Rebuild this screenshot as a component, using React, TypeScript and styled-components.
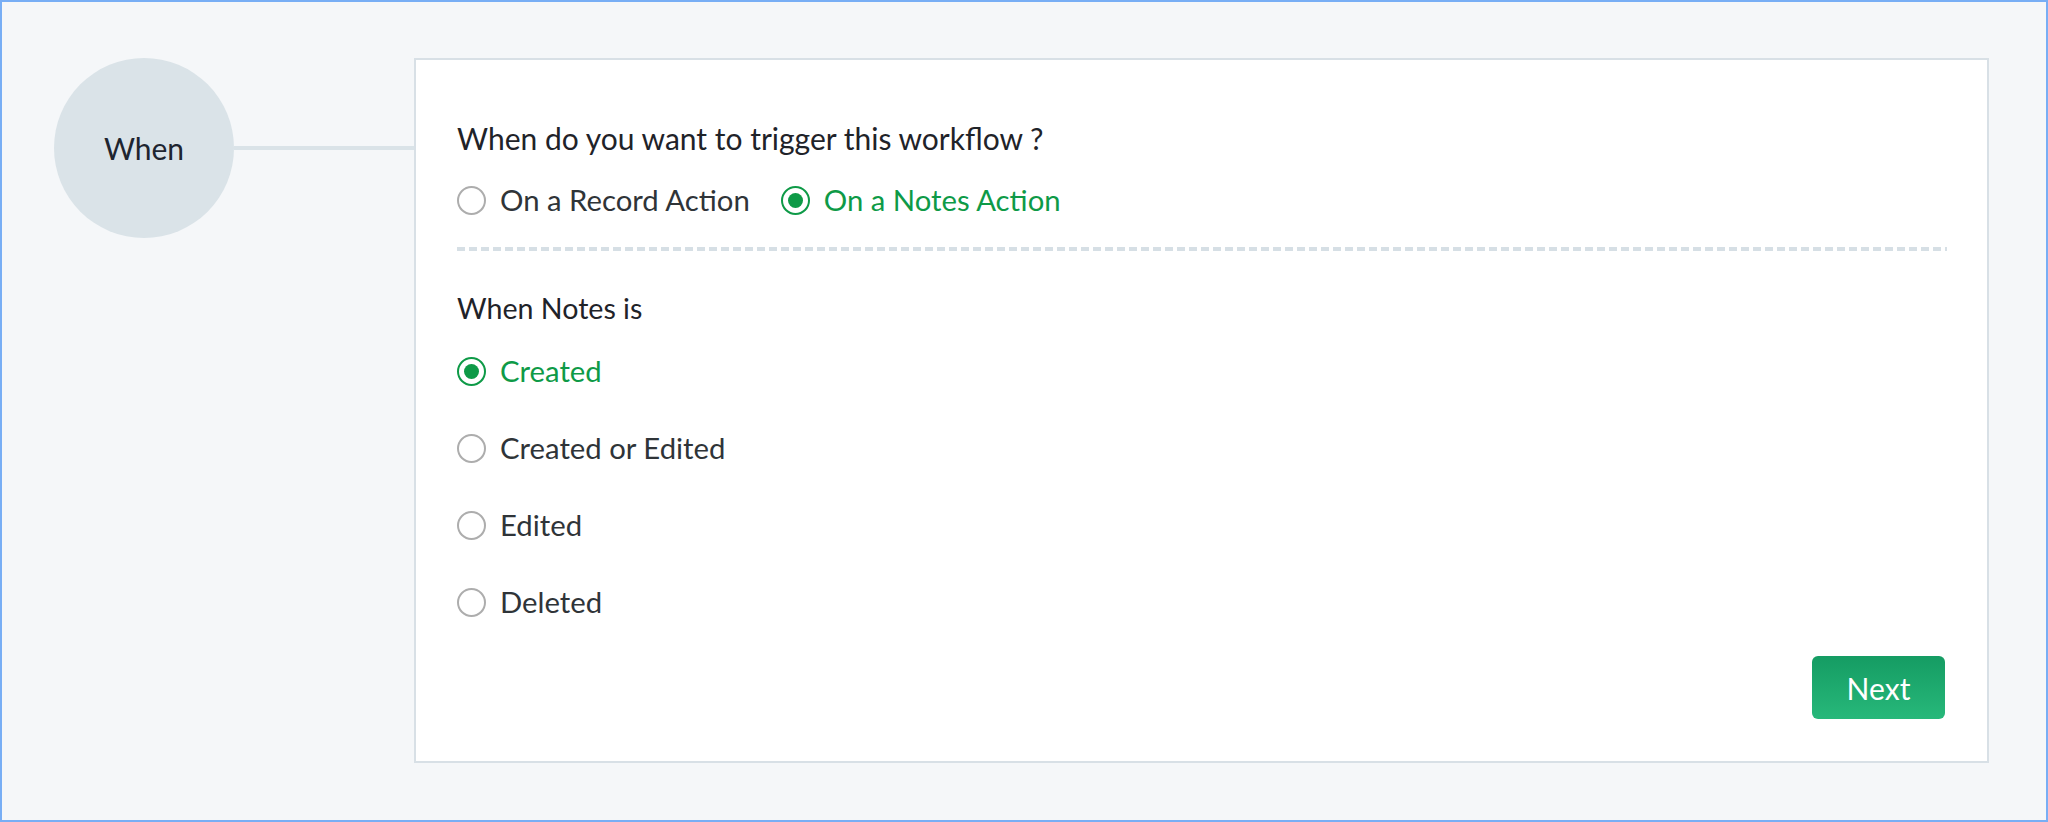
import React from 'react';
import styled, { createGlobalStyle } from 'styled-components';

const GlobalStyle = createGlobalStyle`
  * { box-sizing: border-box; }
  body {
    margin: 0;
    font-family: Lato, "Noto Sans", sans-serif;
  }
`;

const GREEN = '#0e9a47';

const Radio: React.FC<{ label: string; checked?: boolean }> = ({ label, checked }) => (
  <Option>
    <Dot checked={checked} />
    <OptionLabel checked={checked}>{label}</OptionLabel>
  </Option>
);

const App: React.FC = () => {
  return (
    <Frame>
      <GlobalStyle />
      <StepBubble>When</StepBubble>
      <Connector />
      <Panel>
        <Question>When do you want to trigger this workflow ?</Question>
        <InlineOptions>
          <Radio label="On a Record Action" />
          <Radio label="On a Notes Action" checked />
        </InlineOptions>
        <Divider />
        <SubHeading>When Notes is</SubHeading>
        <StackedOptions>
          <Radio label="Created" checked />
          <Radio label="Created or Edited" />
          <Radio label="Edited" />
          <Radio label="Deleted" />
        </StackedOptions>
        <Footer>
          <NextButton>Next</NextButton>
        </Footer>
      </Panel>
    </Frame>
  );
};

export default App;

const Frame = styled.div`
  width: 100vw;
  height: 822px;
  border: 2px solid #78aef5;
  background: #f5f7f9;
  display: flex;
  align-items: flex-start;
  padding: 56px 0 0 52px;
`;

const StepBubble = styled.div`
  width: 180px;
  height: 180px;
  flex-shrink: 0;
  border-radius: 50%;
  background: #dae3e8;
  display: flex;
  align-items: center;
  justify-content: center;
  color: #1e2530;
  font-size: 30px;
`;

const Connector = styled.div`
  width: 180px;
  height: 4px;
  flex-shrink: 0;
  margin-top: 88px;
  background: #dae3e8;
`;

const Panel = styled.div`
  width: 1575px;
  height: 705px;
  background: #fff;
  border: 2px solid #d8e0e6;
  padding: 61px 42px 0 41px;
  display: flex;
  flex-direction: column;
`;

const Question = styled.div`
  font-size: 30px;
  line-height: 34px;
  color: #1f2329;
`;

const InlineOptions = styled.div`
  display: flex;
  gap: 31px;
  margin-top: 30px;
`;

const Option = styled.label`
  display: flex;
  align-items: center;
  gap: 14px;
  height: 30px;
`;

const Dot = styled.span<{ checked?: boolean }>`
  width: 29px;
  height: 29px;
  flex-shrink: 0;
  border-radius: 50%;
  border: 2px solid ${p => (p.checked ? GREEN : '#adadad')};
  display: flex;
  align-items: center;
  justify-content: center;
  &::after {
    content: '';
    display: ${p => (p.checked ? 'block' : 'none')};
    width: 15px;
    height: 15px;
    border-radius: 50%;
    background: ${GREEN};
  }
`;

const OptionLabel = styled.span<{ checked?: boolean }>`
  font-size: 29.3px;
  line-height: 34px;
  color: ${p => (p.checked ? GREEN : '#2f3438')};
`;

const Divider = styled.div`
  width: 1490px;
  height: 4px;
  margin-top: 32px;
  background: repeating-linear-gradient(to right, #d6dfe5 0 8px, transparent 8px 12px);
`;

const SubHeading = styled.div`
  margin-top: 40px;
  font-size: 28.6px;
  line-height: 34px;
  color: #1f2329;
`;

const StackedOptions = styled.div`
  display: flex;
  flex-direction: column;
  gap: 47px;
  margin-top: 31px;
`;

const Footer = styled.div`
  display: flex;
  justify-content: flex-end;
  margin-top: 39px;
`;

const NextButton = styled.button`
  width: 133px;
  height: 63px;
  border: none;
  border-radius: 6px;
  background: linear-gradient(to bottom, #159c63, #27b87a);
  color: #fff;
  font-family: Lato, "Noto Sans", sans-serif;
  font-size: 30px;
  cursor: pointer;
`;
